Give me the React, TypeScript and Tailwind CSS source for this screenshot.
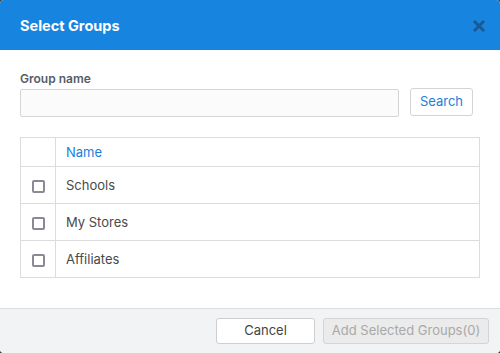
import React, { useState } from 'react';

const groups = ['Schools', 'My Stores', 'Affiliates'];

export default function App() {
  const [selected, setSelected] = useState<string[]>([]);
  const [query, setQuery] = useState('');

  const toggle = (name: string) =>
    setSelected((s) => (s.includes(name) ? s.filter((n) => n !== name) : [...s, name]));

  return (
    <div className="h-[353px] w-[500px] bg-[#3b3b3b] font-['Inter',sans-serif]">
      <div className="flex h-full flex-col overflow-hidden rounded-[4px] bg-white">
        <div className="flex h-[50px] shrink-0 items-center justify-between bg-[#1784e0] pl-5 pr-[15px] pt-[2px]">
          <h1 className="text-[14.5px] font-bold text-white">Select Groups</h1>
          <button className="text-[#1c5891]">
            <svg width="12" height="12" viewBox="0 0 12 12">
              <path d="M2 2 L10 10 M10 2 L2 10" stroke="currentColor" strokeWidth="3" strokeLinecap="square" />
            </svg>
          </button>
        </div>

        <div className="flex-1 px-5 pt-[22px]">
          <label className="block text-[12px] font-semibold leading-[14px] text-[#555d66]">Group name</label>
          <div className="mt-[3px] flex items-center gap-[11px]">
            <input
              value={query}
              onChange={(e) => setQuery(e.target.value)}
              className="h-[28px] w-[379px] rounded-[2px] border border-[#d6d6d6] bg-[#fbfbfb] px-2 text-[13px] outline-none"
            />
            <button className="-mt-[2px] h-[28px] w-[63px] rounded-[3px] border border-[#d4d4d4] bg-white text-[13px] text-[#1a7fd8]">
              Search
            </button>
          </div>

          <table className="mt-[20px] w-[460px] border-collapse text-[13px]">
            <thead>
              <tr className="h-[29px]">
                <th className="w-[35px] border border-[#dcdcdc]"></th>
                <th className="border border-[#dcdcdc] pl-[10px] pt-[2px] text-left font-normal text-[#1a7fd8]">Name</th>
              </tr>
            </thead>
            <tbody>
              {groups.map((g) => (
                <tr key={g} className="h-[37px]">
                  <td className="border border-[#dcdcdc] pt-[1px] text-center">
                    <input
                      type="checkbox"
                      checked={selected.includes(g)}
                      onChange={() => toggle(g)}
                      className="mt-[1px] h-[13px] w-[13px] appearance-none rounded-[2px] border-2 border-[#8c8898] align-middle checked:bg-[#1784e0]"
                    />
                  </td>
                  <td className="border border-[#dcdcdc] pl-[10px] pt-[2px] text-[#4a4a4a]">{g}</td>
                </tr>
              ))}
            </tbody>
          </table>
        </div>

        <div className="flex h-[45px] shrink-0 items-center justify-end gap-2 border-t border-[#dcdde0] bg-[#f2f3f5] pr-[11px]">
          <button className="h-[26px] w-[99px] rounded-[3px] border border-[#cfcfcf] bg-white text-[13px] text-[#444]">
            Cancel
          </button>
          <button
            disabled={selected.length === 0}
            className="h-[26px] w-[166px] rounded-[3px] border border-[#d4d4d4] bg-[#ebebeb] text-[13px] text-[#a9a9a9] enabled:bg-[#1784e0] enabled:text-white"
          >
            Add Selected Groups({selected.length})
          </button>
        </div>
      </div>
    </div>
  );
}
